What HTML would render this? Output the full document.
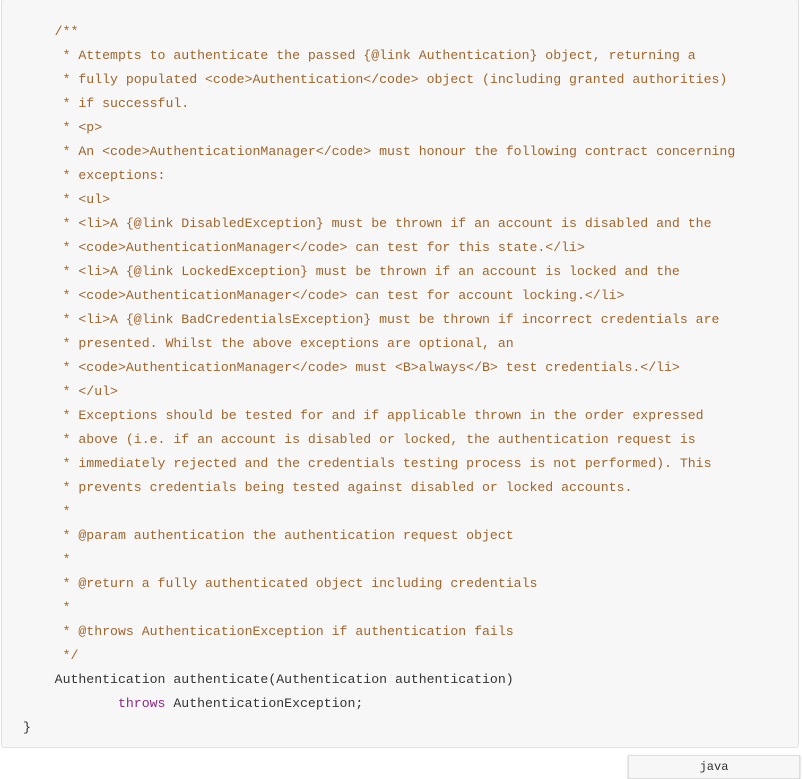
<!DOCTYPE html>
<html><head><meta charset="utf-8"><style>
html,body{margin:0;padding:0;background:#fff;width:802px;height:779px;overflow:hidden}
.box{position:absolute;left:1px;top:-1px;width:798px;height:749px;background:#f7f7f7;border:1px solid #e1e1e1;border-radius:3px;box-sizing:border-box}
pre{margin:0;position:absolute;left:21px;top:20px;font-family:"Liberation Mono",monospace;font-size:13.2px;line-height:24px;color:#333}
.c{color:#a0652c}
.k{color:#8a2a84}
.tab{position:absolute;left:628px;top:755px;width:172px;height:24px;background:#f7f7f7;border:1px solid #ddd;box-shadow:0 1px 2px rgba(0,0,0,.25);box-sizing:border-box;font-family:"Liberation Mono",monospace;font-size:12px;text-align:center;line-height:22px;color:#333}
</style></head><body>
<div class="box"><pre><span class="c">    /**
     * Attempts to authenticate the passed {@link Authentication} object, returning a
     * fully populated &lt;code&gt;Authentication&lt;/code&gt; object (including granted authorities)
     * if successful.
     * &lt;p&gt;
     * An &lt;code&gt;AuthenticationManager&lt;/code&gt; must honour the following contract concerning
     * exceptions:
     * &lt;ul&gt;
     * &lt;li&gt;A {@link DisabledException} must be thrown if an account is disabled and the
     * &lt;code&gt;AuthenticationManager&lt;/code&gt; can test for this state.&lt;/li&gt;
     * &lt;li&gt;A {@link LockedException} must be thrown if an account is locked and the
     * &lt;code&gt;AuthenticationManager&lt;/code&gt; can test for account locking.&lt;/li&gt;
     * &lt;li&gt;A {@link BadCredentialsException} must be thrown if incorrect credentials are
     * presented. Whilst the above exceptions are optional, an
     * &lt;code&gt;AuthenticationManager&lt;/code&gt; must &lt;B&gt;always&lt;/B&gt; test credentials.&lt;/li&gt;
     * &lt;/ul&gt;
     * Exceptions should be tested for and if applicable thrown in the order expressed
     * above (i.e. if an account is disabled or locked, the authentication request is
     * immediately rejected and the credentials testing process is not performed). This
     * prevents credentials being tested against disabled or locked accounts.
     *
     * @param authentication the authentication request object
     *
     * @return a fully authenticated object including credentials
     *
     * @throws AuthenticationException if authentication fails
     */</span>
    Authentication authenticate(Authentication authentication)
            <span class="k">throws</span> AuthenticationException;
}</pre></div>
<div class="tab">java</div>
</body></html>
